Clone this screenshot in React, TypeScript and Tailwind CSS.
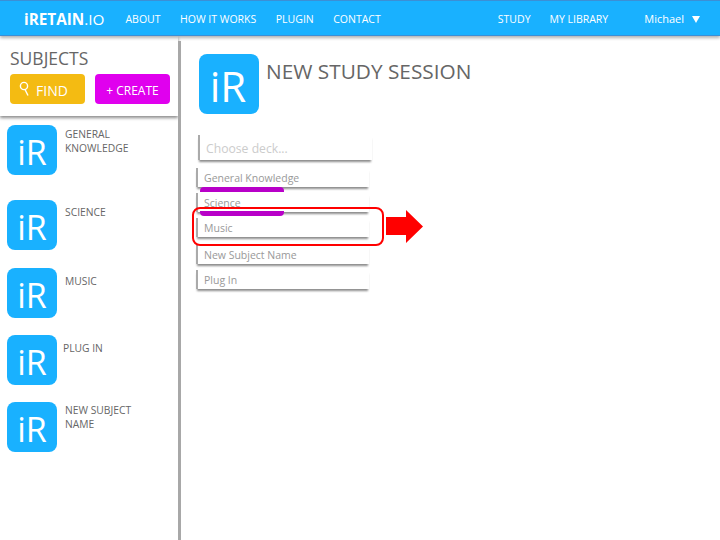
import React from 'react';

const subjects = [
  { name: ['GENERAL', 'KNOWLEDGE'], height: 'h-[75px]', textClass: 'pl-[8px] pt-[2px]' },
  { name: ['SCIENCE'], height: 'h-[68px]', textClass: 'pl-[8px] pt-[5px]' },
  { name: ['MUSIC'], height: 'h-[67px]', textClass: 'pl-[8px] pt-[6px]' },
  { name: ['PLUG IN'], height: 'h-[67px]', textClass: 'pl-[6px] pt-[6px]' },
  { name: ['NEW SUBJECT', 'NAME'], height: 'h-[67px]', textClass: 'pl-[8px] pt-[1px]' },
];

const decks = [
  { name: 'General Knowledge', mt: 'mt-[8px]' },
  { name: 'Science', mt: 'mt-[6px]' },
  { name: 'Music', mt: 'mt-[6px]' },
  { name: 'New Subject Name', mt: 'mt-[8px]' },
  { name: 'Plug In', mt: 'mt-[6px]' },
];

function Logo({ large }: { large?: boolean }) {
  return (
    <div
      className={
        large
          ? 'flex h-[60px] w-[60px] shrink-0 items-center justify-center rounded-[8px] bg-[#19b1ff] pt-[3px] pr-[2px] text-[42px] leading-none text-white'
          : 'flex h-[50px] w-[50px] shrink-0 items-center justify-center rounded-[8px] bg-[#19b1ff] pt-[3px] text-[34px] leading-none text-white'
      }
    >
      iR
    </div>
  );
}

export default function App() {
  return (
    <div className="relative flex h-[540px] w-[720px] flex-col overflow-hidden bg-white font-['Open_Sans',sans-serif]">
      {/* Top nav */}
      <header className="z-10 flex h-[36px] shrink-0 items-center border-t border-b border-[#3b8fd6] bg-[#19b1ff] pl-[24px] pr-[20px] pt-[3px] text-[10.5px] text-white shadow-[0_2px_3px_rgba(0,0,0,0.3)]">
        <span className="mr-[21px] text-[15.3px]">
          <b className="font-bold">iRETAIN</b>.IO
        </span>
        <nav className="flex gap-[19.5px]">
          <span>ABOUT</span>
          <span>HOW IT WORKS</span>
          <span>PLUGIN</span>
          <span>CONTACT</span>
        </nav>
        <nav className="ml-auto flex items-center gap-[19px]">
          <span>STUDY</span>
          <span>MY LIBRARY</span>
          <span className="ml-[17px] flex items-center gap-[8px] text-[11px]">
            Michael
            <svg width="8" height="7" viewBox="0 0 8 7">
              <path d="M0 0h8L4 7z" fill="#fff" />
            </svg>
          </span>
        </nav>
      </header>

      <div className="flex min-h-0 flex-1">
        {/* Sidebar */}
        <aside className="w-[178px] shrink-0">
          <div className="h-[80px] pl-[10px] pr-[8px] pt-[10px] shadow-[0_2px_3px_rgba(0,0,0,0.45)]">
            <h2 className="text-[17.5px] leading-[24px] text-[#666]">SUBJECTS</h2>
            <div className="mt-[4px] flex gap-[10px]">
              <button className="flex h-[30px] w-[75px] items-center rounded-[4px] bg-[#f4bb12] pl-[9px] pt-[2px] text-[14px] text-white">
                <svg width="11" height="16" viewBox="0 0 11 16" fill="none" stroke="#fff" strokeWidth="1.4" className="mr-[6px] -mt-[2px]">
                  <circle cx="5" cy="5" r="3.6" />
                  <path d="M6 8.5 9 14.5" />
                </svg>
                FIND
              </button>
              <button className="flex h-[30px] w-[75px] items-center justify-center rounded-[4px] bg-[#e000ee] pt-[3px] text-[12px] text-white">
                + CREATE
              </button>
            </div>
          </div>
          <ul className="pl-[7px] pt-[9px]">
            {subjects.map((s) => (
              <li key={s.name[0]} className={`flex ${s.height}`}>
                <Logo />
                <p className={`text-[10.3px] leading-[14px] text-[#666] ${s.textClass}`}>
                  {s.name.map((line) => (
                    <span key={line} className="block">
                      {line}
                    </span>
                  ))}
                </p>
              </li>
            ))}
          </ul>
        </aside>

        {/* Divider */}
        <div className="mt-[5px] w-[3px] shrink-0 bg-[#a8a8a8]" />

        {/* Main */}
        <main className="flex-1 pl-[17px] pt-[18px]">
          <div className="flex">
            <div className="ml-[1px]">
              <Logo large />
            </div>
            <h1 className="pl-[7px] text-[20.8px] leading-[34px] text-[#666]">NEW STUDY SESSION</h1>
          </div>
          <div className="mt-[21px] w-[174px]">
            <div className="flex h-[25px] items-center border-l-2 border-[#aaa] pl-[6px] pt-[4px] text-[12.2px] text-[#ccc] shadow-[0_3px_2px_-1px_rgba(0,0,0,0.45)]">
              Choose deck...
            </div>
            <div className="-ml-[2px]">
              {decks.map((d) => (
                <div
                  key={d.name}
                  className={`relative flex h-[19px] w-[173px] items-center border-l-2 border-[#aaa] pl-[6px] pt-[3px] text-[10.5px] text-[#999] shadow-[0_3px_2px_-1px_rgba(0,0,0,0.45)] ${d.mt}`}
                >
                  {d.name}
                </div>
              ))}
            </div>
          </div>
        </main>
      </div>

      {/* Purple highlight bars */}
      <div className="absolute left-[200px] top-[187px] h-[5px] w-[84px] rounded-t-[4px] bg-[#b800c8]" />
      <div className="absolute left-[200px] top-[211px] h-[5px] w-[84px] rounded-b-[4px] bg-[#b800c8]" />

      {/* Callout */}
      <div className="absolute left-[192px] top-[207px] h-[39px] w-[192px] rounded-[8px] border-2 border-[#f00]" />
      <svg className="absolute left-[386px] top-[210px]" width="37" height="33" viewBox="0 0 37 33">
        <path d="M0 7h20V0l17 16.5L20 33v-8H0z" fill="#f00" />
      </svg>
    </div>
  );
}
